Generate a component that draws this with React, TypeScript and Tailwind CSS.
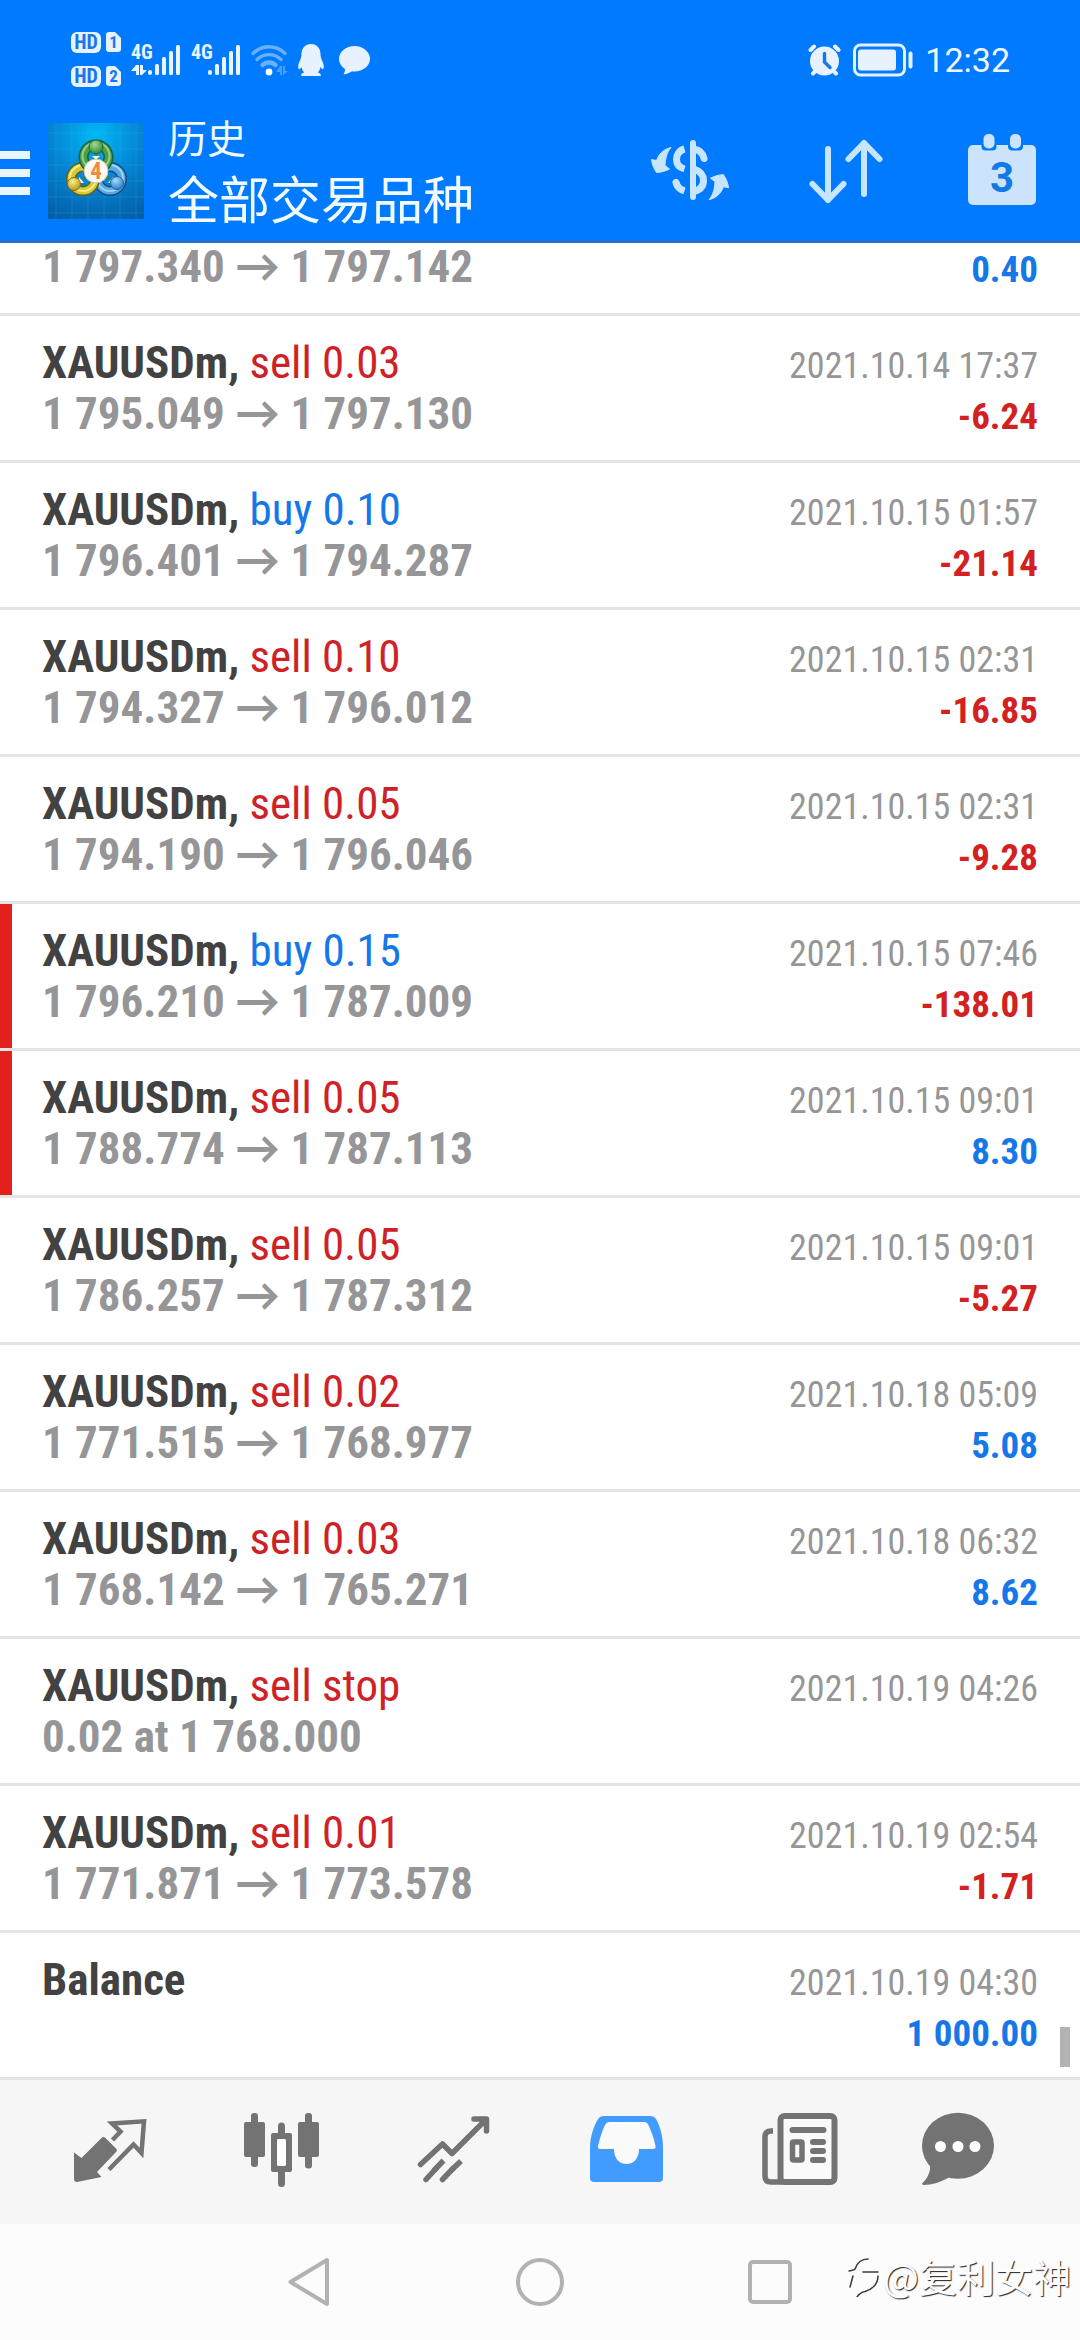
import type { ReactNode } from "react";

type Deal = {
  id: string;
  symbol?: string;
  action?: string;
  side?: "buy" | "sell";
  detail?: string;
  time?: string;
  profit?: string;
  marked?: boolean;
};

const deals: Deal[] = [
  { id: "d0", detail: "1 797.340 → 1 797.142", profit: "0.40" },
  { id: "d1", symbol: "XAUUSDm,", side: "sell", action: "sell 0.03", time: "2021.10.14 17:37", detail: "1 795.049 → 1 797.130", profit: "-6.24" },
  { id: "d2", symbol: "XAUUSDm,", side: "buy", action: "buy 0.10", time: "2021.10.15 01:57", detail: "1 796.401 → 1 794.287", profit: "-21.14" },
  { id: "d3", symbol: "XAUUSDm,", side: "sell", action: "sell 0.10", time: "2021.10.15 02:31", detail: "1 794.327 → 1 796.012", profit: "-16.85" },
  { id: "d4", symbol: "XAUUSDm,", side: "sell", action: "sell 0.05", time: "2021.10.15 02:31", detail: "1 794.190 → 1 796.046", profit: "-9.28" },
  { id: "d5", symbol: "XAUUSDm,", side: "buy", action: "buy 0.15", time: "2021.10.15 07:46", detail: "1 796.210 → 1 787.009", profit: "-138.01", marked: true },
  { id: "d6", symbol: "XAUUSDm,", side: "sell", action: "sell 0.05", time: "2021.10.15 09:01", detail: "1 788.774 → 1 787.113", profit: "8.30", marked: true },
  { id: "d7", symbol: "XAUUSDm,", side: "sell", action: "sell 0.05", time: "2021.10.15 09:01", detail: "1 786.257 → 1 787.312", profit: "-5.27" },
  { id: "d8", symbol: "XAUUSDm,", side: "sell", action: "sell 0.02", time: "2021.10.18 05:09", detail: "1 771.515 → 1 768.977", profit: "5.08" },
  { id: "d9", symbol: "XAUUSDm,", side: "sell", action: "sell 0.03", time: "2021.10.18 06:32", detail: "1 768.142 → 1 765.271", profit: "8.62" },
  { id: "d10", symbol: "XAUUSDm,", side: "sell", action: "sell stop", time: "2021.10.19 04:26", detail: "0.02 at 1 768.000" },
  { id: "d11", symbol: "XAUUSDm,", side: "sell", action: "sell 0.01", time: "2021.10.19 02:54", detail: "1 771.871 → 1 773.578", profit: "-1.71" },
  { id: "d12", symbol: "Balance", time: "2021.10.19 04:30", profit: "1 000.00" },
];

function DealRow({ deal }: { deal: Deal }) {
  return (
    <li
      className={
        "relative shrink-0 border-b-[3px] border-[#e4e4e4] px-[42px] pb-[21px] " +
        (deal.symbol ? "pt-[21px]" : "pt-0")
      }
    >
      {deal.marked && <span className="absolute inset-y-0 left-0 w-3 bg-[#e2201c]" />}
      {deal.symbol && (
        <div className="flex h-[51px] items-baseline justify-between">
          <p className="text-[45px] leading-[51px] text-[#424242]">
            <b>{deal.symbol}</b>{" "}
            <span className={deal.side === "buy" ? "text-[#1677e8]" : "text-[#cf2227]"}>{deal.action}</span>
          </p>
          <time className="text-[36px] leading-[42px] text-[#969698]">{deal.time}</time>
        </div>
      )}
      <div className="flex h-[51px] items-baseline justify-between font-bold">
        <p className="text-[45px] leading-[51px] text-[#969698]">{deal.detail ?? "\u00a0"}</p>
        <p
          className={
            "text-[37px] leading-[42px] " +
            (deal.profit?.startsWith("-") ? "text-[#d32020]" : "text-[#1677e8]")
          }
        >
          {deal.profit}
        </p>
      </div>
    </li>
  );
}

function HdBadge({ slot }: { slot: string }) {
  return (
    <div className="flex gap-[5px] font-bold text-[#1877ee]">
      <span className="flex h-[21px] w-[30px] items-center justify-center rounded-[6px] bg-[#e6f2ff] text-[20px] leading-[21px]">HD</span>
      <span className="flex h-[20px] w-[15px] items-center justify-center rounded-[3px] bg-[#e6f2ff] text-[17px] leading-[20px] [clip-path:polygon(0_0,60%_0,100%_30%,100%_100%,0_100%)]">
        {slot}
      </span>
    </div>
  );
}

function Signal({ data }: { data?: boolean }) {
  return (
    <svg width="50" height="32" viewBox="0 0 50 32" fill="#eaf4ff" className="overflow-visible" aria-hidden="true">
      <text x="0" y="15" fontSize="20" fontWeight="bold">4G</text>
      {data && <path d="M5 21v10h3V21H5L0 27h5zM9 31V21h3v5h4l-5 5z" />}
      <rect x="17" y="26" width="4" height="5" rx="2" />
      <rect x="24" y="20" width="4" height="11" rx="1.5" />
      <rect x="31" y="13" width="4" height="18" rx="1.5" />
      <rect x="38" y="7" width="4" height="24" rx="1.5" />
      <rect x="45" y="1" width="4" height="30" rx="1.5" />
    </svg>
  );
}

function StatusBar() {
  return (
    <div className="flex h-[110px] items-center justify-between pt-[9px] pr-[70px] pl-[71px]">
      <div className="flex items-center gap-[10px]">
        <div className="flex flex-col gap-[13px]">
          <HdBadge slot="1" />
          <HdBadge slot="2" />
        </div>
        <Signal data />
        <Signal />
        <svg width="37" height="32" viewBox="0 0 37 32" fill="none" aria-hidden="true">
          <g stroke="#69b1ff" strokeWidth="3.4" strokeLinecap="round">
            <path d="M2 9.5C11 .5 25 .5 34 9.5" />
            <path d="M6 15.500C13 9 23 9 30 15.500" />
          </g>
          <path d="M11.500 21C15 17.500 21 17.500 24.500 21" stroke="#69b1ff" strokeWidth="4.500" strokeLinecap="round" />
          <circle cx="18" cy="28" r="3.400" fill="#fff" />
          <path d="M29 22v9h2v-9h-2l-4 6h4zM32 31v-9h2v5h3z" fill="#4b9fff" />
        </svg>
        <svg width="26" height="32" viewBox="0 0 26 32" fill="#e8f2ff" aria-hidden="true">
          <path d="M13 0C7 0 3.500 4.500 3.500 10c0 3-.7 4.500-2 7.500C.2 20.500-.3 24 .8 25c.8.600 2-1 2.700-2 .3 2 1.200 4 2.700 5.500C4 29.300 3 30.200 3 31c0 .7.600 1 2 1h16c1.400 0 2-.3 2-1 0-.8-1-1.700-3.200-2.500 1.500-1.500 2.400-3.500 2.700-5.500.7 1 1.900 2.600 2.700 2 1.100-1 .6-4.500-.7-7.500-1.300-3-2-4.500-2-7.500C22.500 4.500 19 0 13 0z" />
        </svg>
        <svg width="33" height="32" viewBox="0 0 33 32" fill="#e8f2ff" className="ml-1" aria-hidden="true">
          <path d="M16.500 2C8 2 1 7.700 1 14.800c0 4.200 2.400 7.800 6 10.200 0 2-.5 3.700-1.500 5.500 3.500-.4 6.500-1.700 8.500-3.200.8.100 1.600.2 2.500.2 8.500 0 15.500-5.600 15.500-12.700S25 2 16.500 2z" />
        </svg>
      </div>
      <div className="flex items-center gap-[12px]">
        <svg width="33" height="32" viewBox="0 0 33 32" aria-hidden="true">
          <g stroke="#e8f2ff" strokeWidth="4" strokeLinecap="round">
            <path d="M2.500 6 6 2.500M30.500 6 27 2.500M5 29.500l4-4M28 29.500l-4-4" />
          </g>
          <circle cx="16.500" cy="17" r="14.500" fill="#e8f2ff" />
          <path d="M16.500 9.500v8.500l5.500 5.500" fill="none" stroke="#1877ee" strokeWidth="3.400" strokeLinecap="round" />
        </svg>
        <svg width="60" height="34" viewBox="0 0 60 34" fill="#e8f2ff" aria-hidden="true">
          <rect x="1.500" y="2" width="50" height="30" rx="6" fill="none" stroke="#e8f2ff" strokeWidth="3" />
          <rect x="5" y="6.500" width="38" height="21" rx="3" />
          <rect x="55.500" y="8.500" width="4" height="17" rx="2" />
        </svg>
        <span className="font-['Roboto',sans-serif] text-[34px] leading-[40px] text-[#f2f8ff]">12:32</span>
      </div>
    </div>
  );
}

function Logo() {
  return (
    <svg width="96" height="96" viewBox="0 0 96 96" role="img" aria-label="MetaTrader 4">
      <defs>
        <radialGradient id="lgBg" cx="50%" cy="12%" r="95%">
          <stop offset="0" stopColor="#00b8f6" />
          <stop offset="0.5" stopColor="#0584d2" />
          <stop offset="1" stopColor="#045fa8" />
        </radialGradient>
        <radialGradient id="lgG" cx="40%" cy="30%" r="70%">
          <stop offset="0" stopColor="#a5d896" />
          <stop offset="1" stopColor="#2f8a35" />
        </radialGradient>
        <radialGradient id="lgY" cx="40%" cy="30%" r="70%">
          <stop offset="0" stopColor="#fbf08a" />
          <stop offset="1" stopColor="#b99a1a" />
        </radialGradient>
        <radialGradient id="lgB" cx="40%" cy="30%" r="70%">
          <stop offset="0" stopColor="#a9dcfb" />
          <stop offset="1" stopColor="#2a82cc" />
        </radialGradient>
      </defs>
      <rect width="96" height="96" fill="url(#lgBg)" />
      <path d="M8 0v96M24 0v96M40 0v96M56 0v96M72 0v96M88 0v96M0 10h96M0 26h96M0 42h96M0 58h96M0 74h96M0 90h96" stroke="#3fb4ec" strokeOpacity="0.2" />
      <path d="M48 30 34 56h28z" fill="#3d7f4a" />
      <g fill="none">
        <circle cx="62" cy="56" r="12" stroke="#174a80" strokeWidth="10" />
        <circle cx="62" cy="56" r="12" stroke="#58a9e2" strokeWidth="7" />
        <circle cx="62" cy="55" r="13" stroke="#9fd3f5" strokeWidth="2" />
        <circle cx="35" cy="56" r="12" stroke="#5d6420" strokeWidth="10" />
        <circle cx="35" cy="56" r="12" stroke="#d9c935" strokeWidth="7" />
        <circle cx="35" cy="55" r="13" stroke="#f5ec86" strokeWidth="2" />
        <circle cx="48" cy="34" r="12.500" stroke="#1c5f3a" strokeWidth="10" />
        <circle cx="48" cy="34" r="12.500" stroke="#4aa04a" strokeWidth="7" />
        <circle cx="48" cy="33" r="13.500" stroke="#94cf85" strokeWidth="2" />
      </g>
      <path d="M44 33h8l-4 4zM31 54l5 6-6 0zM65 54l-5 6 6 0z" fill="#f4faf4" />
      <circle cx="48" cy="24" r="7" fill="url(#lgG)" stroke="#1c6b36" />
      <circle cx="26" cy="61" r="6.500" fill="url(#lgY)" stroke="#84721a" />
      <circle cx="69" cy="60" r="6.500" fill="url(#lgB)" stroke="#20639f" />
      <circle cx="48" cy="48" r="12" fill="#fdfaf6" stroke="#b9c4b0" />
      <text x="48" y="56" textAnchor="middle" fontSize="23" fontWeight="bold" fill="#f08a3c">4</text>
    </svg>
  );
}

const icon = "size-[96px] shrink-0";

function AppBar() {
  return (
    <div className="flex h-[130px] items-center pb-[8px]">
      <button type="button" aria-label="菜单" className="mt-[3px] flex w-[30px] flex-col gap-[10px]">
        <span className="h-[8px] bg-[#eaf6ff]" />
        <span className="h-[8px] bg-[#eaf6ff]" />
        <span className="h-[8px] bg-[#eaf6ff]" />
      </button>
      <div className="ml-[18px]">
        <Logo />
      </div>
      <div className="ml-[24px] flex-1 pb-[6px] font-['Noto_Sans_CJK_SC',sans-serif] text-[#f0faff]">
        <h1 className="text-[39px] leading-[58px]">历史</h1>
        <p className="text-[51px] leading-[64px]">全部交易品种</p>
      </div>
      <div className="flex">
        <button type="button" aria-label="货币" className="flex w-[156px] justify-center">
          <svg className={icon} viewBox="0 0 96 96" aria-hidden="true">
            <g fill="none" stroke="#c8e5ff" strokeWidth="7">
              <path d="M42.500 26C37 27.500 34.500 32 34.500 36.500c0 5 3 8 8 9.500" />
              <path d="M34 60c1.500 4 4 6.500 8.500 8" />
              <path d="M51 20v54" strokeWidth="6" strokeLinecap="round" />
              <path d="M52 26c6 1 9 5 10 9.500M34 59.500l.5 1" strokeLinecap="round" />
              <path d="M52 46c6 2 9.500 6 9.500 11.500C61.500 63 58 67 52 68.500" />
            </g>
            <g fill="#c8e5ff" stroke="#c8e5ff" strokeLinejoin="round">
              <path d="M29 24.500C21 26.500 17 31 14.500 37.500L9.500 36.500C10 41 12 46 14.500 49.500C18.500 49.500 24 48 27.500 46L23 42.500C23.500 35 25 29 29 24.500Z" />
              <path d="M29 24.500C21 26.500 17 31 14.500 37.500L9.500 36.500C10 41 12 46 14.500 49.500C18.500 49.500 24 48 27.500 46L23 42.500C23.500 35 25 29 29 24.500Z" transform="rotate(180 48 50.600)" />
            </g>
          </svg>
        </button>
        <button type="button" aria-label="排序" className="flex w-[156px] justify-center">
          <svg className={icon} viewBox="0 0 96 96" fill="none" stroke="#c8e5ff" strokeWidth="6" strokeLinecap="round" strokeLinejoin="round" aria-hidden="true">
            <path d="M30 26v51M14.500 61 30 77l15.500-16M66 71V20M50.500 36 66 20l15.500 16" />
          </svg>
        </button>
        <button type="button" aria-label="日期" className="flex w-[156px] justify-center">
          <svg className={icon} viewBox="0 0 96 96" aria-hidden="true">
            <rect x="14" y="22" width="68" height="60" rx="5" fill="#cce3fc" />
            <path d="M27.500 20h15v3.500a4 4 0 0 1-4 4h-7a4 4 0 0 1-4-4zM54 20h15v3.500a4 4 0 0 1-4 4h-7a4 4 0 0 1-4-4z" fill="#007aff" />
            <rect x="29.500" y="11" width="11" height="14.500" rx="5" fill="#cce3fc" />
            <rect x="56" y="11" width="11" height="14.500" rx="5" fill="#cce3fc" />
            <text x="48" y="69" textAnchor="middle" fontFamily="Roboto, sans-serif" fontWeight="bold" fontSize="42" fill="#117ae6">3</text>
          </svg>
        </button>
      </div>
    </div>
  );
}

function Tab({ label, active, children }: { label: string; active?: boolean; children: ReactNode }) {
  return (
    <button
      type="button"
      aria-label={label}
      className={"flex flex-1 items-center justify-center " + (active ? "text-[#429bff]" : "text-[#737373]")}
    >
      <svg className={icon} viewBox="0 0 96 96" fill="currentColor" aria-hidden="true">
        {children}
      </svg>
    </button>
  );
}

function TabBar() {
  return (
    <nav className="flex h-[144px] bg-[#f6f6f6] px-[24px]">
      <Tab label="行情">
        <path d="M12 48.500 19.500 54l20-20q2-2 4 0L54.500 45q1 1 0 2.500L35 68l4.500 5L15 78q-3 0-3-3z" />
        <path d="M50.500 36l8-8.500-8.500-8 32-2.200-2.500 31.700-8-8.500L47 65.500" fill="none" stroke="currentColor" strokeWidth="4.500" />
      </Tab>
      <Tab label="图表">
        <rect x="10" y="18" width="21" height="35" rx="2" />
        <rect x="17" y="9" width="7" height="54" rx="3" />
        <rect x="64" y="18" width="21" height="35" rx="2" />
        <rect x="71" y="9" width="7" height="55.500" rx="3" />
        <path fillRule="evenodd" d="M39 29h17q2 0 2 2v35q0 2-2 2H39q-2 0-2-2V31q0-2 2-2zM45 35q-2 0-2 2v23q0 2 2 2h5q2 0 2-2V37q0-2-2-2z" />
        <path d="M44 30v-8a3.500 3.500 0 0 1 7 0v8zM44 67v12.500a3.500 3.500 0 0 0 7 0V67z" />
        <rect x="43" y="35" width="9" height="27" rx="2" fill="#fff" />
      </Tab>
      <Tab label="交易">
        <g fill="none" stroke="currentColor" strokeWidth="5.500" strokeLinecap="round">
          <path d="M14.500 60.500 36.500 40l9.500 9.500L80 15.500M68 15h12.500V27" strokeLinejoin="round" />
          <path d="M20 75.500 30 64.500M36.500 75.500 47 64.500" />
          <path d="M28 66.500 37.500 56.500M45 66.500 55 57" strokeLinecap="butt" />
        </g>
      </Tab>
      <Tab label="历史" active>
        <path d="M26 12h46q4 0 6 3c4 7 7 17 7 29v30q0 4-4 4H16q-4 0-4-4V44c0-12 4-22 8-29q2-3 6-3z" />
        <path fill="#fafafa" d="M31 18h35q3 0 4.500 3C73 27 76 34 77.500 42q.5 3-2.500 3H61c0 9-5 15-12.500 15S36 54 36 45H22q-2.500 0-2-3c2-8 4-15 7-21q1.500-3 4-3z" />
      </Tab>
      <Tab label="新闻">
        <rect x="30.500" y="12" width="54" height="66" rx="4" fill="#fafafa" stroke="currentColor" strokeWidth="6" />
        <path d="M23 27h-2q-6 0-6 6v39q0 6 6 6h12" fill="none" stroke="currentColor" strokeWidth="5.500" />
        <path d="M42.500 26h31M63 38h10M63 47h10M63 56h10" stroke="currentColor" strokeWidth="6" strokeLinecap="round" />
        <rect x="42.500" y="38" width="9.500" height="18" rx="1" fill="#fafafa" stroke="currentColor" strokeWidth="5.500" />
      </Tab>
      <Tab label="信息">
        <ellipse cx="36" cy="41.700" rx="36" ry="33" />
        <path d="M8 60c1 8-3 15-7.500 19-.8 1 0 2 1 2C10 81 19 78 28 73z" />
        <g fill="#fff">
          <circle cx="18.500" cy="42.500" r="5.500" />
          <circle cx="36" cy="42.500" r="5.500" />
          <circle cx="53" cy="42.500" r="5.500" />
        </g>
      </Tab>
    </nav>
  );
}

function SystemNav() {
  return (
    <div className="relative h-[116px] bg-[#fcfcfc]">
      <div className="mx-auto grid h-full max-w-[690px] grid-cols-3 place-items-center">
        <button type="button" aria-label="返回">
          <svg width="48" height="50" viewBox="0 0 48 50" fill="none" stroke="#b2b2b2" strokeWidth="4" strokeLinejoin="round" aria-hidden="true">
            <path d="M4.500 25 41 3v44z" />
          </svg>
        </button>
        <button type="button" aria-label="主页">
          <svg width="48" height="48" viewBox="0 0 48 48" fill="none" stroke="#b2b2b2" strokeWidth="4" aria-hidden="true">
            <circle cx="24" cy="24" r="22" />
          </svg>
        </button>
        <button type="button" aria-label="最近任务">
          <svg width="48" height="48" viewBox="0 0 48 48" fill="none" stroke="#b2b2b2" strokeWidth="4" aria-hidden="true">
            <rect x="4" y="4" width="40" height="40" rx="3" />
          </svg>
        </button>
      </div>
      <div className="absolute right-[9px] bottom-[39px] flex items-center gap-[2px]">
        <svg width="34" height="42" viewBox="0 0 34 42" fill="none" strokeLinecap="round" aria-hidden="true">
          <g stroke="#3a3a3a" strokeWidth="1.500">
            <path d="M2 16C5 15.500 7 15 8 14 10 8 14 4 21 4M16 17h15M6 21 3 32M31 21c0 9-7 14-13 15.500C15 37 12 39 10 42" />
          </g>
        </svg>
        <span className="font-['Noto_Sans_CJK_SC',sans-serif] text-[38px] leading-[50px] text-[#fdfdfd] [text-shadow:1px_1px_1px_#222222]">@复利女神</span>
      </div>
    </div>
  );
}

export default function App() {
  return (
    <div className="flex h-screen flex-col bg-white font-['Roboto_Condensed','Lato',sans-serif]">
      <header className="border-b-[3px] border-[#2272cc] bg-[#007aff]">
        <StatusBar />
        <AppBar />
      </header>
      <main className="relative flex min-h-0 flex-1 flex-col justify-end overflow-hidden">
        <ul className="flex flex-col">
          {deals.map((deal) => (
            <DealRow key={deal.id} deal={deal} />
          ))}
        </ul>
        <span className="absolute right-[10px] bottom-[13px] h-[40px] w-[10px] bg-[#b3b3b3]" />
      </main>
      <TabBar />
      <SystemNav />
    </div>
  );
}
